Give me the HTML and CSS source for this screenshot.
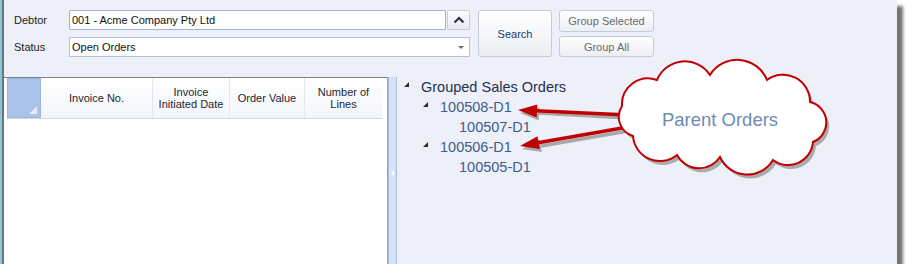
FILE: index.html
```html
<!DOCTYPE html>
<html lang="en">
<head>
  <meta charset="UTF-8">
  <title>Grouped Sales Orders</title>
  <link rel="stylesheet" href="styles.css">
</head>
<body>
  <div class="window">
    <div class="filters">
      <div class="fields">
        <label class="field-label">Debtor</label>
        <div class="field-row">
          <input class="text-box debtor" type="text" value="001 - Acme Company Pty Ltd">
          <button class="up-button">
            <svg width="12" height="8" viewBox="0 0 12 8"><polyline points="1.5,6.5 6,2 10.5,6.5" fill="none" stroke="#2b3440" stroke-width="2.2"/></svg>
          </button>
        </div>
        <label class="field-label">Status</label>
        <div class="field-row">
          <div class="text-box status">
            <span>Open Orders</span>
            <span class="drop-arrow"></span>
          </div>
        </div>
      </div>
      <button class="btn search">Search</button>
      <div class="group-buttons">
        <button class="btn group">Group Selected</button>
        <button class="btn group all">Group All</button>
      </div>
    </div>

    <div class="main">
      <div class="grid">
        <div class="grid-header">
          <div class="corner"><span class="corner-mark"></span></div>
          <div class="col col-invoice">Invoice No.</div>
          <div class="col col-date">Invoice<br>Initiated Date</div>
          <div class="col col-value">Order Value</div>
          <div class="col col-lines">Number of<br>Lines</div>
        </div>
      </div>

      <div class="splitter"><span class="splitter-arrow"></span></div>

      <div class="tree">
        <div class="node level-0"><span class="toggle"><i></i></span><span class="node-text root">Grouped Sales Orders</span></div>
        <div class="node level-1"><span class="toggle"><i></i></span><span class="node-text">100508-D1</span></div>
        <div class="node level-2"><span class="toggle"></span><span class="node-text">100507-D1</span></div>
        <div class="node level-1"><span class="toggle"><i></i></span><span class="node-text">100506-D1</span></div>
        <div class="node level-2"><span class="toggle"></span><span class="node-text">100505-D1</span></div>
      </div>
    </div>

    <!-- callout drawn over the tree -->
    <svg class="callout" width="912" height="280" viewBox="0 0 912 280">
      <g fill="none" stroke="#8a8a8a" stroke-width="3.5" opacity="0.7">
        <line x1="539" y1="113" x2="628" y2="118"/>
        <line x1="541" y1="146" x2="628" y2="131"/>
      </g>
      <g fill="#8a8a8a" opacity="0.7">
        <polygon points="520,113 539.3,107.4 538.7,120.4"/>
        <polygon points="522,149 541.9,152 539.5,139.2"/>
      </g>
      <g fill="none" stroke="#c00000" stroke-width="3.5">
        <line x1="536" y1="110.8" x2="628" y2="115"/>
        <line x1="538" y1="142.8" x2="628" y2="127"/>
      </g>
      <g fill="#c00000">
        <polygon points="518,110 537.3,104.4 536.7,117.4"/>
        <polygon points="520,146 539.9,149 537.5,136.2"/>
      </g>
      <path class="cloud-shadow" d="M622 106 A26 26 0 0 1 657 80 A30 30 0 0 1 710 75 A32 32 0 0 1 767 80 A27 27 0 0 1 810 102 A21 21 0 0 1 813 142 A25 25 0 0 1 773 160 A30 30 0 0 1 720 157 A25 25 0 0 1 677 155 A27 27 0 0 1 633 136 A20 20 0 0 1 622 106 Z" transform="translate(3 4)" fill="#7d7d7d" opacity="0.6"/>
      <path d="M622 106 A26 26 0 0 1 657 80 A30 30 0 0 1 710 75 A32 32 0 0 1 767 80 A27 27 0 0 1 810 102 A21 21 0 0 1 813 142 A25 25 0 0 1 773 160 A30 30 0 0 1 720 157 A25 25 0 0 1 677 155 A27 27 0 0 1 633 136 A20 20 0 0 1 622 106 Z" fill="#ffffff" stroke="#c00000" stroke-width="2"/>
      <text x="720" y="126" text-anchor="middle" class="callout-text">Parent Orders</text>
    </svg>
  </div>
</body>
</html>
```

FILE: styles.css
```css
body {
  margin: 0;
  background: #ffffff;
  font-family: 'Liberation Sans', Arial, sans-serif;
}

.window {
  position: relative;
  width: 897px;
  height: 264px;
  box-sizing: border-box;
  background: #edf0f8;
  border-left: 2px solid #86c9d8;
  box-shadow: inset 2px 0 0 #6f747c, 6px 6px 3px rgba(0, 0, 0, 0.55);
}

.filters {
  display: flex;
  align-items: flex-start;
  padding: 10px 0 0 12px;
  height: 67px;
  box-sizing: border-box;
}

.fields {
  display: grid;
  grid-template-columns: 55px auto;
  grid-auto-rows: 20px;
  row-gap: 7px;
  align-items: center;
}

.field-label {
  font-size: 11px;
  color: #1b1b1b;
}

.field-row {
  display: flex;
  gap: 1px;
  height: 20px;
}

.text-box {
  height: 20px;
  box-sizing: border-box;
  border: 1px solid #b4c3dc;
  background: #ffffff;
  font-family: inherit;
  font-size: 11px;
  color: #111;
  padding: 0 0 0 2px;
  margin: 0;
}

.text-box.debtor {
  width: 377px;
  border-color: #9fb4d8;
  outline: none;
}

.text-box.status {
  width: 401px;
  display: flex;
  align-items: center;
  justify-content: space-between;
  padding-right: 5px;
}

.drop-arrow {
  width: 0;
  height: 0;
  border-left: 3px solid transparent;
  border-right: 3px solid transparent;
  border-top: 3px solid #6d6d6d;
}

.up-button {
  width: 23px;
  height: 20px;
  padding: 0;
  display: flex;
  align-items: center;
  justify-content: center;
  border: 1px solid #c7cdd8;
  border-radius: 2px;
  background: linear-gradient(#fdfdfe, #e7eaf0);
}

.btn {
  font-family: inherit;
  font-size: 11px;
  border: 1px solid #c6ccd7;
  border-radius: 3px;
  background: linear-gradient(#ffffff, #eceef3);
  padding: 0;
}

.search {
  width: 74px;
  height: 47px;
  margin-left: 8px;
  color: #1d3b67;
}

.group-buttons {
  display: flex;
  flex-direction: column;
  gap: 4px;
  margin-left: 7px;
}

.group {
  width: 95px;
  height: 22px;
  color: #6a6a6a;
}

.group.all {
  height: 21px;
}

.main {
  display: flex;
  margin-top: 10px;
  height: 187px;
}

.grid {
  width: 384px;
  margin-left: 2px;
  box-sizing: border-box;
  background: #ffffff;
  border-top: 1px solid #7d8188;
  border-right: 1px solid #9aa3b0;
}

.grid-header {
  display: flex;
  height: 40px;
  margin-left: 3px;
  width: 375px;
  background: linear-gradient(#ffffff, #f3f5f9);
  border-bottom: 1px solid #d3d9e3;
}

.corner {
  position: relative;
  width: 34px;
  background: #a9c3ea;
  border: 1px solid #9fb5d8;
  box-sizing: border-box;
}

.corner-mark {
  position: absolute;
  right: 3px;
  bottom: 3px;
  width: 0;
  height: 0;
  border-left: 8px solid transparent;
  border-bottom: 8px solid #e4ecf8;
}

.col {
  display: flex;
  align-items: center;
  justify-content: center;
  text-align: center;
  font-size: 11px;
  line-height: 12px;
  color: #1e2533;
  border-right: 1px solid #e3e7ee;
  box-sizing: border-box;
}

.col-invoice { width: 112px; }
.col-date { width: 77px; }
.col-value { width: 75px; }
.col-lines { width: 77px; border-right: none; }

.splitter {
  width: 9px;
  box-sizing: border-box;
  background: #d3e2f7;
  border-left: 1px solid #a8bddc;
  border-right: 1px solid #a8bddc;
  display: flex;
  align-items: center;
  justify-content: center;
}

.splitter-arrow {
  width: 0;
  height: 0;
  border-top: 3px solid transparent;
  border-bottom: 3px solid transparent;
  border-right: 3px solid #ffffff;
  margin-top: 4px;
}

.tree {
  flex: 1;
  padding-left: 7px;
}

.node {
  display: flex;
  height: 20px;
  line-height: 20px;
  font-size: 14.5px;
}

.level-1 { margin-left: 19px; }
.level-2 { margin-left: 38px; }

.toggle {
  width: 17px;
  flex: none;
}

.toggle i {
  display: block;
  width: 0;
  height: 0;
  margin-top: 5px;
  border-left: 5px solid transparent;
  border-bottom: 5px solid #2b2b2b;
}

.node-text {
  color: #3d5e8a;
}

.node-text.root {
  color: #1d3054;
}

.callout {
  position: absolute;
  left: -2px;
  top: 0;
  pointer-events: none;
}

.callout-text {
  font-family: 'Liberation Sans', Arial, sans-serif;
  font-size: 18.5px;
  fill: #6d8bb2;
}
```
